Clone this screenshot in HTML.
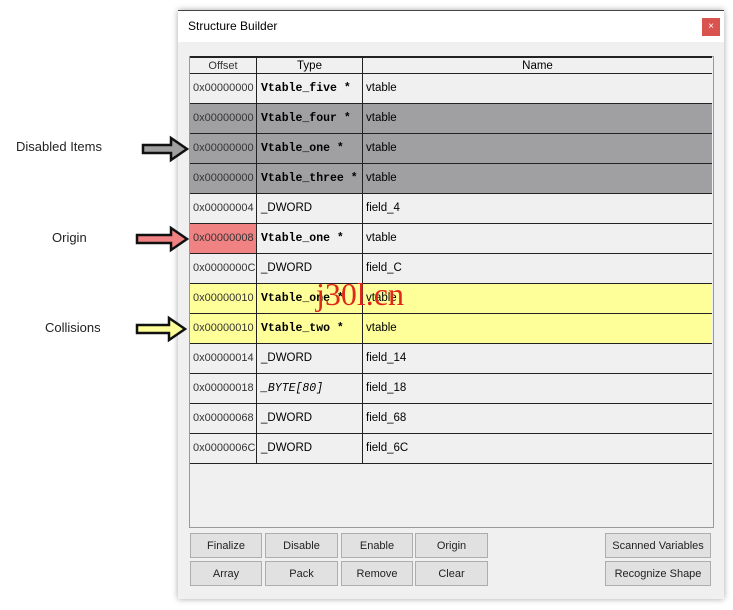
<!DOCTYPE html>
<html><head><meta charset="utf-8"><style>
body{margin:0;width:733px;height:610px;background:#fff;position:relative;overflow:hidden;font-family:"Liberation Sans",sans-serif;}
.a{position:absolute}
.win{left:178px;top:10px;width:546px;height:588px;background:#f0f0f0;box-shadow:0 0 6px rgba(0,0,0,.35);border-top:1px solid #444}
.title{left:178px;top:11px;width:546px;height:31px;background:#fff;font-size:12px;line-height:30px}
.tbl{left:189px;top:56px;width:523px;height:470px;border:1px solid #999;background:#f0f0f0}
.row{position:absolute;left:190px;width:522px;height:30px;box-sizing:border-box;border-bottom:1px solid #222;font-size:11.5px;line-height:29px}
.c{position:absolute;top:0;height:29px;border-right:1px solid #222;box-sizing:border-box;white-space:nowrap;overflow:hidden}
.o{left:0;width:67px;padding-left:3px;font-size:11px;color:#333}
.t{left:67px;width:106px;padding-left:4px;font-family:"Liberation Mono",monospace;font-weight:bold;font-size:11.5px}
.t.n{font-family:"Liberation Sans",sans-serif;font-weight:normal;font-size:11.5px}
.n2{left:173px;width:349px;padding-left:3px;border-right:none}
.g{background:#a0a0a2}
.y{background:#ffff9a}
.btn{position:absolute;height:25px;background:#e1e1e1;border:1px solid #adadad;font-size:11px;text-align:center;line-height:25px;color:#222;box-sizing:border-box}
.lbl{position:absolute;font-size:13px;color:#222}
</style></head><body>
<div class="a win"></div>
<div class="a title"><span style="padding-left:10px">Structure Builder</span></div>
<div class="a" style="left:702px;top:18px;width:18px;height:18px;background:#d9534f;color:#fff;font-size:10px;text-align:center;line-height:18px">×</div>
<div class="a tbl"></div>
<div class="row" style="top:56px;height:18px;line-height:16px;border-top:2px solid #222;background:#f0f0f0">
<div class="c o" style="height:16px;text-align:center;padding:0">Offset</div>
<div class="c t n" style="height:16px;text-align:center;padding:0">Type</div>
<div class="c n2" style="height:16px;text-align:center;padding:0">Name</div></div>

<div class="row" style="top:74px"><div class="c o">0x00000000</div><div class="c t">Vtable_five *</div><div class="c n2">vtable</div></div>
<div class="row g" style="top:104px"><div class="c o">0x00000000</div><div class="c t">Vtable_four *</div><div class="c n2">vtable</div></div>
<div class="row g" style="top:134px"><div class="c o">0x00000000</div><div class="c t">Vtable_one *</div><div class="c n2">vtable</div></div>
<div class="row g" style="top:164px"><div class="c o">0x00000000</div><div class="c t">Vtable_three *</div><div class="c n2">vtable</div></div>
<div class="row" style="top:194px"><div class="c o">0x00000004</div><div class="c t n">_DWORD</div><div class="c n2">field_4</div></div>
<div class="row" style="top:224px"><div class="c o" style="background:#f08283">0x00000008</div><div class="c t">Vtable_one *</div><div class="c n2">vtable</div></div>
<div class="row" style="top:254px"><div class="c o">0x0000000C</div><div class="c t n">_DWORD</div><div class="c n2">field_C</div></div>
<div class="row y" style="top:284px"><div class="c o">0x00000010</div><div class="c t">Vtable_one *</div><div class="c n2">vtable</div></div>
<div class="row y" style="top:314px"><div class="c o">0x00000010</div><div class="c t">Vtable_two *</div><div class="c n2">vtable</div></div>
<div class="row" style="top:344px"><div class="c o">0x00000014</div><div class="c t n">_DWORD</div><div class="c n2">field_14</div></div>
<div class="row" style="top:374px"><div class="c o">0x00000018</div><div class="c t n" style="font-style:italic;font-family:'Liberation Mono',monospace">_BYTE[80]</div><div class="c n2">field_18</div></div>
<div class="row" style="top:404px"><div class="c o">0x00000068</div><div class="c t n">_DWORD</div><div class="c n2">field_68</div></div>
<div class="row" style="top:434px"><div class="c o">0x0000006C</div><div class="c t n">_DWORD</div><div class="c n2">field_6C</div></div>

<div class="a" style="left:316px;top:276px;font-family:'Liberation Serif',serif;font-size:32px;color:#e0281a">j30l.cn</div>

<div class="btn" style="left:190px;top:533px;width:72px">Finalize</div>
<div class="btn" style="left:265px;top:533px;width:73px">Disable</div>
<div class="btn" style="left:341px;top:533px;width:72px">Enable</div>
<div class="btn" style="left:415px;top:533px;width:73px">Origin</div>
<div class="btn" style="left:190px;top:561px;width:72px">Array</div>
<div class="btn" style="left:265px;top:561px;width:73px">Pack</div>
<div class="btn" style="left:341px;top:561px;width:72px">Remove</div>
<div class="btn" style="left:415px;top:561px;width:73px">Clear</div>
<div class="btn" style="left:605px;top:533px;width:106px">Scanned Variables</div>
<div class="btn" style="left:605px;top:561px;width:106px">Recognize Shape</div>

<div class="lbl" style="left:16px;top:139px">Disabled Items</div>
<div class="lbl" style="left:52px;top:230px">Origin</div>
<div class="lbl" style="left:45px;top:320px">Collisions</div>
<svg class="a" style="left:130px;top:130px" width="62" height="215">
<path d="M13 15h28v-7l16 11-16 11v-7h-28z" fill="#a0a0a0" stroke="#111" stroke-width="2.5"/>
<path d="M7 105h34v-7l16 11-16 11v-7h-34z" fill="#f08283" stroke="#111" stroke-width="2.5"/>
<path d="M7 195h32v-7l16 11-16 11v-7h-32z" fill="#ffff9a" stroke="#111" stroke-width="2.5"/>
</svg>
</body></html>
